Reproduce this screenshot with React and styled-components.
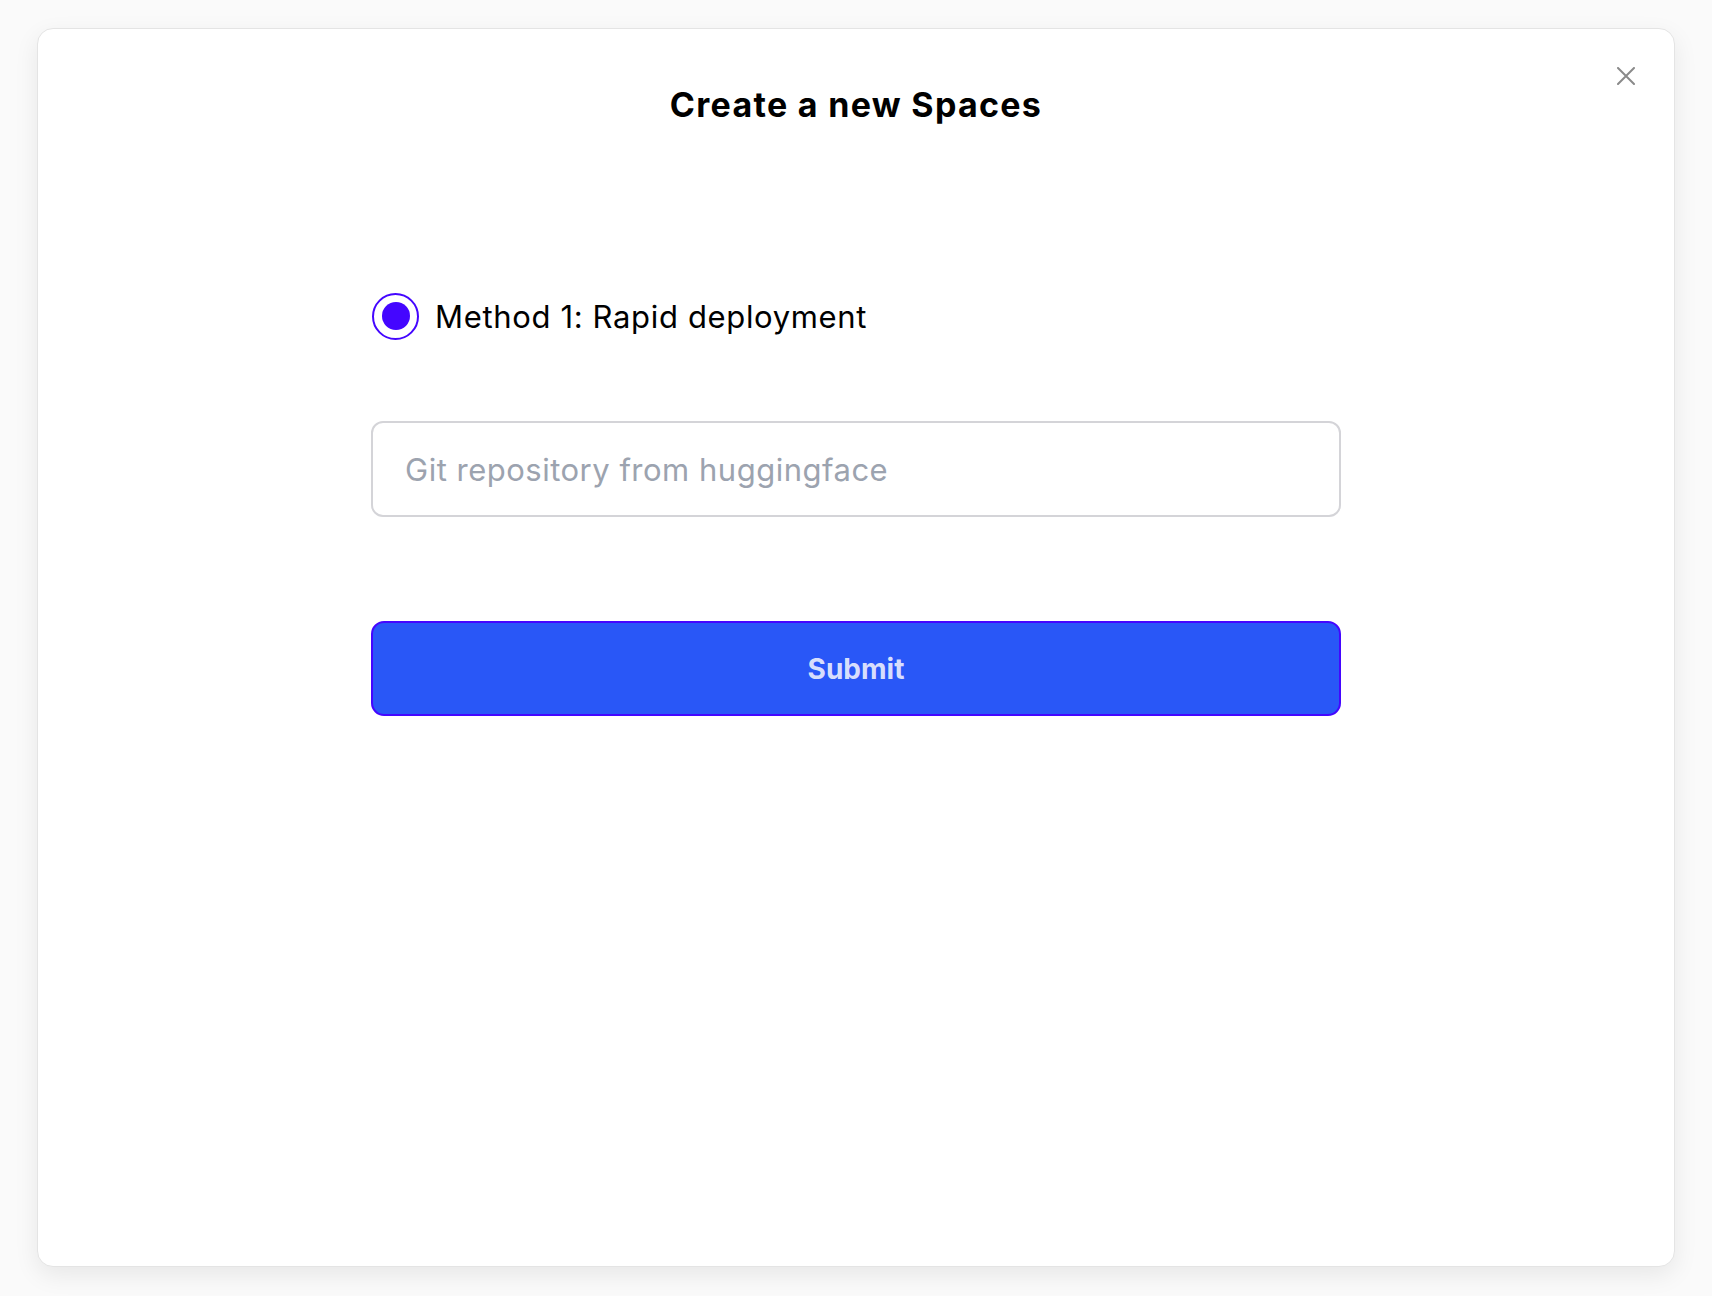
import React, { useState } from "react";
import styled, { createGlobalStyle } from "styled-components";

const GlobalStyle = createGlobalStyle`
  * {
    box-sizing: border-box;
  }
  body {
    margin: 0;
    background: #fafafa;
    font-family: Inter, "Noto Sans", "Liberation Sans", sans-serif;
  }
`;

const App = () => {
  const [method, setMethod] = useState("rapid");
  const [repo, setRepo] = useState("");

  return (
    <>
      <GlobalStyle />
      <Page>
        <Modal>
          <CloseButton aria-label="Close">
            <svg width="18" height="18" viewBox="0 0 18 18">
              <path
                d="M1 1 L17 17 M17 1 L1 17"
                stroke="#8a8a8a"
                strokeWidth="2"
                strokeLinecap="round"
              />
            </svg>
          </CloseButton>
          <Title>Create a new Spaces</Title>
          <Form onSubmit={(e) => e.preventDefault()}>
            <RadioRow onClick={() => setMethod("rapid")}>
              <RadioCircle $checked={method === "rapid"} />
              <RadioLabel>Method 1: Rapid deployment</RadioLabel>
            </RadioRow>
            <RepoInput
              placeholder="Git repository from huggingface"
              value={repo}
              onChange={(e) => setRepo(e.target.value)}
            />
            <SubmitButton type="submit">Submit</SubmitButton>
          </Form>
        </Modal>
      </Page>
    </>
  );
};

const Page = styled.div`
  min-height: 100vh;
  display: flex;
  padding: 28px 37px 29px 37px;
`;

const Modal = styled.div`
  position: relative;
  flex: 1;
  display: flex;
  flex-direction: column;
  align-items: center;
  background: #ffffff;
  border: 1px solid #e4e4e4;
  border-radius: 16px;
  box-shadow: 0 8px 24px rgba(0, 0, 0, 0.08);
  padding-top: 56px;
`;

const CloseButton = styled.button`
  position: absolute;
  top: 38px;
  right: 39px;
  width: 18px;
  height: 18px;
  padding: 0;
  border: none;
  background: none;
  display: flex;
  cursor: pointer;
`;

const Title = styled.h2`
  margin: 0;
  font-size: 34px;
  line-height: 40px;
  font-weight: 700;
  color: #000000;
  letter-spacing: 1.3px;
`;

const Form = styled.form`
  width: 970px;
  display: flex;
  flex-direction: column;
  margin-top: 168px;
`;

const RadioRow = styled.label`
  display: flex;
  align-items: center;
  gap: 16px;
  height: 46px;
  cursor: pointer;
`;

const RadioCircle = styled.span`
  width: 47px;
  height: 47px;
  margin-left: 1px;
  border-radius: 50%;
  border: 2px solid #4406ff;
  display: flex;
  align-items: center;
  justify-content: center;

  &::after {
    content: "";
    width: 28px;
    height: 28px;
    border-radius: 50%;
    background: ${(p) => (p.$checked ? "#4406ff" : "transparent")};
  }
`;

const RadioLabel = styled.span`
  font-size: 31px;
  letter-spacing: 0.65px;
  color: #000000;
`;

const RepoInput = styled.input`
  margin-top: 82px;
  height: 96px;
  width: 100%;
  border: 2px solid #d4d4d8;
  border-radius: 12px;
  padding: 0 32px;
  font-family: inherit;
  font-size: 31px;
  letter-spacing: 0.5px;
  color: #111827;
  outline: none;

  &::placeholder {
    color: #9ca3af;
  }
`;

const SubmitButton = styled.button`
  margin-top: 104px;
  height: 95px;
  width: 100%;
  background: #2957f7;
  border: 2px solid #4406ff;
  border-radius: 13px;
  color: #d7defc;
  font-family: inherit;
  font-size: 28px;
  font-weight: 700;
  cursor: pointer;
`;

export default App;
